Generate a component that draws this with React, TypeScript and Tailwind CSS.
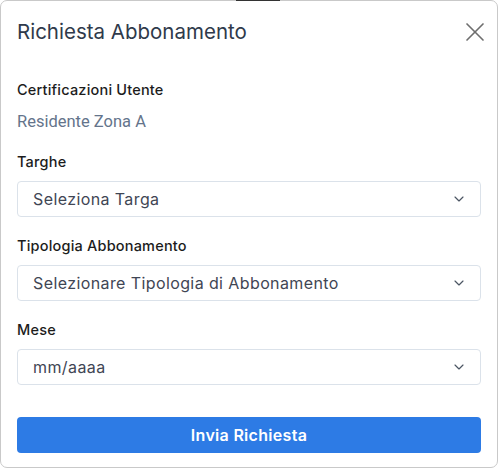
import React from 'react';
import { X, ChevronDown } from 'lucide-react';

const font = { fontFamily: 'Inter, "Noto Sans", sans-serif' };

// Campo select del form
const SelectField: React.FC<{ label: string; placeholder: string }> = ({ label, placeholder }) => (
  <div className="flex flex-col">
    <label className="text-[14.5px] font-medium text-[#1c1c1c] leading-5 tracking-[0.2px] mb-[9px]">{label}</label>
    <div className="flex items-center justify-between h-[36px] pl-[15px] pr-[13px] border border-[#dbe2ea] rounded-[4px] bg-white">
      <span className="text-[16px] text-[#3f4654] tracking-[0.4px]">{placeholder}</span>
      <ChevronDown className="w-4 h-4 text-[#4b5563]" strokeWidth={1.75} />
    </div>
  </div>
);

export default function App() {
  return (
    <div className="w-[498px] h-[469px] bg-white relative" style={font}>
      <div className="absolute top-0 left-[236px] w-[44px] h-[1px] bg-[#333]" />
      <div className="w-[498px] h-[468px] border border-[#c9c9c9] rounded-[7px] bg-white flex flex-col">
        {/* header */}
        <div className="flex items-center justify-between pl-4 pr-[6px] pt-[15px] pb-[14px]">
          <h2 className="text-[20.5px] font-normal text-[#2f3a4b] leading-8">Richiesta Abbonamento</h2>
          <X className="w-8 h-8 text-[#6e6e6e]" strokeWidth={1.25} />
        </div>

        {/* body */}
        <div className="flex flex-col px-4 pt-[18px]">
          <div className="flex flex-col">
            <span className="text-[14.5px] font-medium text-[#1c1c1c] leading-5 tracking-[0.2px]">Certificazioni Utente</span>
            <span
              className="text-[16.5px] text-[#64748b] mt-[12px] leading-5"
              style={{ fontFamily: 'Roboto, sans-serif' }}
            >
              Residente Zona A
            </span>
          </div>
          <div className="mt-[20px] flex flex-col gap-[19px]">
            <SelectField label="Targhe" placeholder="Seleziona Targa" />
            <SelectField label="Tipologia Abbonamento" placeholder="Selezionare Tipologia di Abbonamento" />
            <SelectField label="Mese" placeholder="mm/aaaa" />
          </div>
          <button className="mt-[32px] h-[36px] w-full rounded-[4px] bg-[#2d7be5] text-white text-[16px] font-semibold tracking-[0.3px]">
            Invia Richiesta
          </button>
        </div>
      </div>
    </div>
  );
}
